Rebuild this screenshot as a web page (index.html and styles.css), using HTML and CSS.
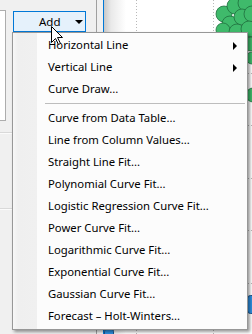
FILE: index.html
```html
<!DOCTYPE html>
<html lang="en">
<head>
    <meta charset="UTF-8">
    <title>Add menu</title>
    <link rel="stylesheet" href="styles.css">
</head>
<body>

<div class="window">
    <div class="sidebar">
        <div class="sidebar-top">
            <div class="list"></div>
            <button class="add-btn"><span>Add</span><span class="caret"></span></button>
        </div>
        <div class="rule"></div>
        <div class="rule rule-low"></div>
    </div>
    <div class="splitter"></div>
    <div class="plot">
        <svg class="chart" width="148" height="334" viewBox="0 0 148 334">
            <g class="grid">
                <line x1="32.5" y1="0" x2="32.5" y2="334"/>
                <line x1="109.5" y1="0" x2="109.5" y2="334"/>
                <line x1="0" y1="73.5" x2="148" y2="73.5"/>
                <line x1="0" y1="125.5" x2="148" y2="125.5"/>
                <line x1="0" y1="178.5" x2="148" y2="178.5"/>
                <line x1="0" y1="230.5" x2="148" y2="230.5"/>
                <line x1="0" y1="283.5" x2="148" y2="283.5"/>
            </g>
            <g class="points">
                <circle cx="120" cy="14" r="8"/>
                <circle cx="131" cy="6" r="8"/>
                <circle cx="142" cy="3" r="8"/>
                <circle cx="126" cy="24" r="8"/>
                <circle cx="138" cy="17" r="8"/>
                <circle cx="148" cy="14" r="8"/>
                <circle cx="119" cy="30" r="7"/>
                <circle cx="133" cy="32" r="8"/>
                <circle cx="145" cy="29" r="8"/>
                <circle cx="147" cy="44" r="7"/>
                <circle cx="148" cy="58" r="6"/>
                <circle cx="149" cy="95" r="7"/>
            </g>
            <g class="bars">
                <rect x="0.5" y="328.5" width="9" height="12" rx="3"/>
                <rect x="143.5" y="295.5" width="10" height="18" rx="3"/>
            </g>
        </svg>
    </div>
</div>

<ul class="menu">
    <li class="item has-sub">Horizontal Line</li>
    <li class="item has-sub">Vertical Line</li>
    <li class="item">Curve Draw...</li>
    <li class="separator"></li>
    <li class="item">Curve from Data Table...</li>
    <li class="item">Line from Column Values...</li>
    <li class="item">Straight Line Fit...</li>
    <li class="item">Polynomial Curve Fit...</li>
    <li class="item">Logistic Regression Curve Fit...</li>
    <li class="item">Power Curve Fit...</li>
    <li class="item">Logarithmic Curve Fit...</li>
    <li class="item">Exponential Curve Fit...</li>
    <li class="item">Gaussian Curve Fit...</li>
    <li class="item">Forecast – Holt-Winters...</li>
</ul>

<svg class="cursor" width="13" height="20" viewBox="0 0 13 20">
    <path d="M0.5 0.5 L0.5 16.5 L4.5 12.5 L7.5 18.5 L9.5 17.5 L6.5 11.5 L11.5 11.5 Z"/>
</svg>

</body>
</html>
```

FILE: styles.css
```css
html, body {
    margin: 0;
}
body {
    position: relative;
    width: 252px;
    height: 334px;
    overflow: hidden;
    background-color: #f0f0f0;
    font-family: "Segoe UI", "Noto Sans", sans-serif;
    font-size: 11.3px;
    color: #000;
}
.window {
    display: flex;
    height: 334px;
}
.sidebar {
    width: 96px;
    border-right: 1px solid #a0a0a0;
}
.sidebar-top {
    display: flex;
    gap: 7px;
    height: 121px;
}
.list {
    width: 5px;
    margin-top: 10px;
    background-color: #fff;
    border: 1px solid #adadad;
    border-left: none;
}
.add-btn {
    display: flex;
    align-items: center;
    align-self: flex-start;
    margin-top: 11px;
    width: 73px;
    height: 21px;
    padding: 0 0 0 25px;
    background-color: #e5f1fb;
    border: 1px solid #0078d7;
    font-family: inherit;
    font-size: 11.5px;
    color: #000;
}
.caret {
    margin-left: 14px;
    border-top: 4px solid #000;
    border-left: 4px solid transparent;
    border-right: 4px solid transparent;
}
.rule {
    margin-top: 11px;
    border-top: 1px solid #d9d9d9;
    border-bottom: 1px solid #fbfbfb;
}
.rule-low {
    margin-top: 74px;
}
.splitter {
    width: 6px;
}
.plot {
    flex: 1;
    border-left: 1px solid #0078d7;
    background: linear-gradient(to right, #c8c8c8, #e9e9e9 7px, #fff 22px);
}
.chart {
    display: block;
}
.grid line {
    stroke: #b9b9b9;
    stroke-width: 1;
    stroke-dasharray: 1 2;
}
.points circle {
    fill: #3fba6b;
    stroke: #1f6e3d;
    stroke-width: 0.8;
}
.bars rect {
    fill: #2d8fe0;
    stroke: #1a568f;
}

/* dropdown menu */
.menu {
    position: absolute;
    left: 12px;
    top: 32px;
    width: 233px;
    margin: 0;
    padding: 1px 0 2px 1px;
    list-style: none;
    border: 1px solid #979797;
    background: linear-gradient(to right, #f7f7f7, #efefef 5px, #f0f0f0 24px, #fcfcfc 24px);
    box-shadow: 2px 2px 3px rgba(0, 0, 0, 0.4);
}
.item {
    position: relative;
    height: 22px;
    line-height: 22px;
    padding-left: 34px;
    white-space: nowrap;
}
.has-sub::after {
    content: "";
    position: absolute;
    right: 10px;
    top: 8px;
    border-top: 4px solid transparent;
    border-bottom: 4px solid transparent;
    border-left: 4px solid #000;
}
.separator {
    height: 7px;
    display: flex;
    align-items: center;
    padding: 0 2px 0 31px;
}
.separator::before {
    content: "";
    flex: 1;
    border-top: 1px solid #bdbdbd;
}
.cursor {
    position: absolute;
    left: 51px;
    top: 26px;
}
.cursor path {
    fill: #fff;
    stroke: #000;
    stroke-width: 1;
}
```
